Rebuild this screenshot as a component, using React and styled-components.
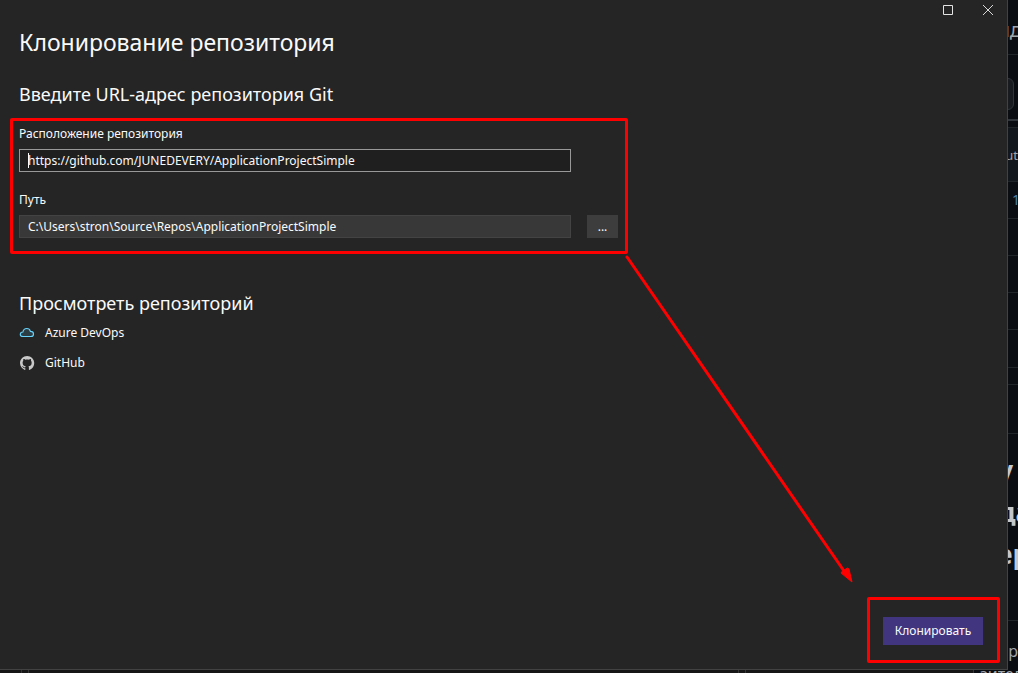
import React, { useState } from "react";
import styled, { createGlobalStyle } from "styled-components";

const GlobalStyle = createGlobalStyle`
  * { box-sizing: border-box; }
  body { margin: 0; background: #0a0d12; }
  body, button, input {
    font-family: "Noto Sans", "Open Sans", sans-serif;
    font-size: 12px;
    line-height: 16px;
    color: #fafafa;
  }
`;

const Desktop = styled.div`
  display: grid;
  grid-template-columns: minmax(0, 1fr) 10px;
  grid-template-rows: minmax(0, 1fr) 3px;
  min-height: 100vh;
`;

const Dialog = styled.main`
  position: relative;
  display: flex;
  flex-direction: column;
  background: #252525;
  border-right: 1px solid #424242;
  border-bottom: 1px solid #424242;
`;

const TitleBar = styled.header`
  display: flex;
  justify-content: flex-end;
  height: 20px;
`;

const WindowButton = styled.button`
  display: grid;
  place-items: center;
  width: 40px;
  padding: 0;
  border: 0;
  background: none;
`;

const Content = styled.div`
  flex: 1;
  padding: 6px 10px 0;
`;

const Title = styled.h1`
  margin: 0 9px;
  font-size: 23px;
  line-height: 32px;
  font-weight: 400;
`;

const Subtitle = styled.h2`
  margin: 0 9px;
  padding-top: ${(p) => p.$gap}px;
  font-size: 18px;
  line-height: 28px;
  font-weight: 400;
`;

const Highlight = styled.div`
  border: 3px solid #ff0000;
  border-radius: 2px;
`;

const Form = styled(Highlight)`
  display: grid;
  gap: 20px;
  max-width: 618px;
  margin-top: 10px;
  padding: 5px 7px 13px 6px;
`;

const Field = styled.div`
  display: grid;
  grid-template-columns: minmax(0, 1fr) 31px;
  column-gap: 16px;
  row-gap: 7px;
`;

const Label = styled.label`
  grid-column: 1 / -1;
`;

const InputWrap = styled.div`
  position: relative;
`;

const TextInput = styled.input`
  display: block;
  width: 100%;
  height: 23px;
  padding: 0 8px;
  border: 1px solid ${(p) => (p.$active ? "#999999" : "#434343")};
  border-radius: 0;
  outline: 0;
  background: ${(p) => (p.$active ? "#1f1f1f" : "#383838")};
`;

const Caret = styled.span`
  position: absolute;
  left: 9px;
  top: 4px;
  width: 1px;
  height: 15px;
  background: #fafafa;
`;

const BrowseButton = styled.button`
  height: 23px;
  padding: 0;
  border: 0;
  background: #3d3d3d;
`;

const Sources = styled.ul`
  display: grid;
  gap: 14px;
  margin: 8px 9px 0;
  padding: 0;
  list-style: none;
`;

const SourceLink = styled.a`
  display: inline-flex;
  align-items: center;
  gap: 10px;
  height: 16px;
  color: inherit;
  text-decoration: none;
  vertical-align: top;
`;

const SourceItem = styled.li`
  height: 16px;
`;

const Footer = styled.footer`
  display: flex;
  justify-content: flex-end;
  padding: 0 7px 6px;
`;

const PrimaryFrame = styled(Highlight)`
  padding: 17px 14px 15px 13px;
`;

const PrimaryButton = styled.button`
  display: block;
  width: 100px;
  height: 28px;
  padding: 0;
  border: 0;
  background: #413580;
`;

const Arrow = styled.svg`
  position: absolute;
  left: 620px;
  top: 250px;
  pointer-events: none;
`;

const PageEdge = styled.aside`
  height: 0;
  min-height: 100%;
  overflow: hidden;
  background: #0a0d12;
`;

const EdgeRow = styled.div`
  display: flex;
  align-items: ${(p) => p.$align || "center"};
  justify-content: flex-end;
  height: ${(p) => p.$height}px;
  padding-top: ${(p) => p.$top || 0}px;
  border-bottom: ${(p) => p.$line || 1}px solid ${(p) => (p.$line ? "#30363b" : "#20252a")};
  background: ${(p) => p.$fill || "transparent"};
  overflow: hidden;
`;

const EdgeText = styled.span`
  flex: none;
  margin-right: ${(p) => p.$over || 0}px;
  font-size: ${(p) => p.$size}px;
  line-height: ${(p) => p.$leading}px;
  font-weight: ${(p) => p.$weight || 400};
  color: ${(p) => p.$color || "#a0a5aa"};
  white-space: nowrap;
`;

const EdgeStack = styled.div`
  display: flex;
  flex-direction: column;
  align-items: flex-end;
`;

const EdgePill = styled.div`
  flex: none;
  width: 20px;
  height: 32px;
  margin-right: 4px;
  border: 1px solid #30353b;
  border-radius: 6px;
  background: #181c21;
`;

const BottomEdge = styled.div`
  grid-column: 1 / -1;
  display: flex;
  height: 3px;
  overflow: hidden;
  background: #161616;
`;

const EdgeCell = styled.div`
  flex: ${(p) => p.$flex};
  border-right: 1px solid #343434;
`;

const BottomText = styled.div`
  flex: 0 0 44px;
  padding-left: 6px;
  background: #0a0d12;
  font-size: 16px;
  line-height: 8px;
  color: #a0a5aa;
  white-space: nowrap;
  overflow: hidden;
`;

const CloudIcon = () => (
  <svg width="16" height="16" viewBox="0 0 16 16" aria-hidden="true">
    <path
      d="M4 11.5C2.3 11.5 1.3 10.7 1.3 9.4C1.3 8.1 2.3 7.1 3.9 7C4.3 4.8 5.8 3.5 7.8 3.5C9.6 3.5 10.9 4.5 11.4 6.3C13.4 6.3 14.5 7.3 14.5 8.9C14.5 10.5 13.5 11.5 11.8 11.5Z"
      fill="#2b3c43"
      stroke="#68d2fa"
      strokeWidth="1.15"
    />
  </svg>
);

const GitHubIcon = () => (
  <svg width="16" height="16" viewBox="0 0 16 16" aria-hidden="true">
    <path
      transform="translate(1 1) scale(.89)"
      fill="#c9c9c9"
      d="M8 0C3.58 0 0 3.58 0 8c0 3.54 2.29 6.53 5.47 7.59.4.07.55-.17.55-.38 0-.19-.01-.82-.01-1.49-2.01.37-2.53-.49-2.69-.94-.09-.23-.48-.94-.82-1.13-.28-.15-.68-.52-.01-.53.63-.01 1.08.58 1.23.82.72 1.21 1.87.87 2.33.66.07-.52.28-.87.51-1.07-1.78-.2-3.64-.89-3.64-3.95 0-.87.31-1.59.82-2.15-.08-.2-.36-1.02.08-2.12 0 0 .67-.21 2.2.82.64-.18 1.32-.27 2-.27s1.36.09 2 .27c1.53-1.04 2.2-.82 2.2-.82.44 1.1.16 1.92.08 2.12.51.56.82 1.27.82 2.15 0 3.07-1.87 3.75-3.65 3.95.29.25.54.73.54 1.48 0 1.07-.01 1.93-.01 2.2 0 .21.15.46.55.38A8.01 8.01 0 0 0 16 8c0-4.42-3.58-8-8-8Z"
    />
  </svg>
);

export default function App() {
  const [url, setUrl] = useState("https://github.com/JUNEDEVERY/ApplicationProjectSimple");
  const [path, setPath] = useState("C:\\Users\\stron\\Source\\Repos\\ApplicationProjectSimple");

  return (
    <>
      <GlobalStyle />
      <Desktop>
        <Dialog>
          <TitleBar>
            <WindowButton aria-label="Развернуть">
              <svg width="12" height="12" viewBox="-1 0 12 12">
                <path d="M1.5 1.5h9v9h-9z" fill="none" stroke="#e4e4e4" />
              </svg>
            </WindowButton>
            <WindowButton aria-label="Закрыть">
              <svg width="12" height="12" viewBox="-1 0 12 12">
                <path d="M1 1l10 10M11 1L1 11" fill="none" stroke="#d8d8d8" />
              </svg>
            </WindowButton>
          </TitleBar>
          <Content>
            <Title>Клонирование репозитория</Title>
            <Subtitle $gap={22}>Введите URL-адрес репозитория Git</Subtitle>
            <Form>
              <Field>
                <Label htmlFor="url">Расположение репозитория</Label>
                <InputWrap>
                  <TextInput id="url" $active value={url} onChange={(e) => setUrl(e.target.value)} />
                  <Caret />
                </InputWrap>
              </Field>
              <Field>
                <Label htmlFor="path">Путь</Label>
                <TextInput id="path" value={path} onChange={(e) => setPath(e.target.value)} />
                <BrowseButton>...</BrowseButton>
              </Field>
            </Form>
            <Subtitle $gap={35}>Просмотреть репозиторий</Subtitle>
            <Sources>
              <SourceItem>
                <SourceLink href="#azure"><CloudIcon />Azure DevOps</SourceLink>
              </SourceItem>
              <SourceItem>
                <SourceLink href="#github"><GitHubIcon />GitHub</SourceLink>
              </SourceItem>
            </Sources>
          </Content>
          <Footer>
            <PrimaryFrame>
              <PrimaryButton>Клонировать</PrimaryButton>
            </PrimaryFrame>
          </Footer>
          <Arrow width="240" height="340" viewBox="0 0 240 340" aria-hidden="true">
            <path d="M7 7L224 321" stroke="#ff0000" strokeWidth="3" strokeLinecap="round" />
            <path d="M232 332L221 323L222.500 321L227.500 318L229 319Z" fill="#ff0000" stroke="#ff0000" />
          </Arrow>
        </Dialog>
        <PageEdge>
          <EdgeRow $height={55} $top={5}><EdgeText $size={20} $leading={24} $over={-4}>ид</EdgeText></EdgeRow>
          <EdgeRow $height={66} $line={2} $top={14}><EdgePill /></EdgeRow>
          <EdgeRow $height={7} />
          <EdgeRow $height={54} $fill="#12171d"><EdgeText $size={13} $leading={16}>out</EdgeText></EdgeRow>
          <EdgeRow $height={37}><EdgeText $size={14} $leading={16} $over={-2} $color="#4a7fb5">1</EdgeText></EdgeRow>
          <EdgeRow $height={37} />
          <EdgeRow $height={37} />
          <EdgeRow $height={37} />
          <EdgeRow $height={38} />
          <EdgeRow $height={17} />
          <EdgeRow $height={49} />
          <EdgeRow $height={187} $align="flex-start" $top={15}>
            <EdgeStack>
              <EdgeText $size={26} $leading={42} $weight={700} $over={5} $color="#c3c7cc">у</EdgeText>
              <EdgeText $size={26} $leading={42} $weight={700} $over={-13} $color="#c3c7cc">да</EdgeText>
              <EdgeText $size={26} $leading={42} $weight={700} $over={-11} $color="#c3c7cc">ер</EdgeText>
            </EdgeStack>
          </EdgeRow>
          <EdgeRow $height={60}><EdgeText $size={16} $leading={20}>р</EdgeText></EdgeRow>
        </PageEdge>
        <BottomEdge>
          <EdgeCell $flex="0 0 22px" />
          <EdgeCell $flex="0 0 7px" />
          <EdgeCell $flex="1" />
          <EdgeCell $flex="0 0 7px" />
          <EdgeCell $flex="0 0 228px" />
          <BottomText>зител</BottomText>
        </BottomEdge>
      </Desktop>
    </>
  );
}
